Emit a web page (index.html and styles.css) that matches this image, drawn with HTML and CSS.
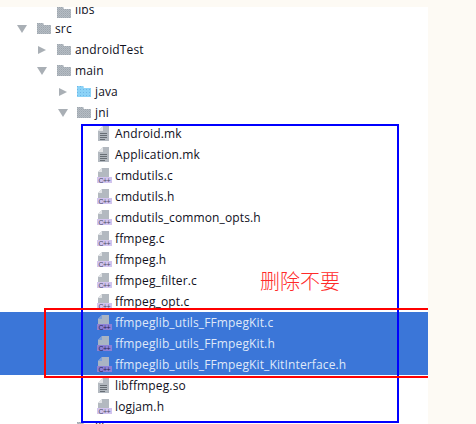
FILE: index.html
```html
<!DOCTYPE html>
<html lang="zh">
<head>
<meta charset="utf-8">
<title>jni</title>
<link rel="stylesheet" href="styles.css">
</head>
<body>
<svg class="defs" width="0" height="0" aria-hidden="true">
  <defs>
    <pattern id="dots" width="2" height="2" patternUnits="userSpaceOnUse">
      <rect width="1" height="1" fill="#9ea6ae"/>
      <rect x="1" y="1" width="1" height="1" fill="#a8b0b8"/>
    </pattern>
    <pattern id="bluedots" width="3" height="3" patternUnits="userSpaceOnUse">
      <rect width="1" height="1" fill="#6fb6e6"/>
    </pattern>
    <symbol id="folder" viewBox="0 0 14 11">
      <path d="M0 0h6l1 2h7v9H0z" fill="#b6bdc4"/>
      <path d="M0 0h6l1 2h7v9H0z" fill="url(#dots)"/>
    </symbol>
    <symbol id="srcfolder" viewBox="0 0 14 11">
      <path d="M0 0h6l1 2h7v9H0z" fill="#8cd3f7"/>
      <path d="M0 0h6l1 2h7v9H0z" fill="url(#bluedots)"/>
    </symbol>
    <symbol id="textfile" viewBox="0 0 11 15">
      <path d="M5 0h6v15H0V5z" fill="#b3b9c0"/>
      <path d="M0 5l5-5v5z" fill="#e2e4e7"/>
      <path d="M2 7.500h7M2 9.500h7M2 11.500h7M2 13.500h5" stroke="#666d74" fill="none"/>
    </symbol>
    <symbol id="cppfile" viewBox="0 0 15 15">
      <path d="M5 0h7v9H1V4z" fill="#b3b9c0"/>
      <path d="M1 4l4-4v4z" fill="#e2e4e7"/>
      <rect x="0" y="9" width="15" height="6" fill="#d2c4ee"/>
      <text x="1.500" y="14.500" textLength="12" class="cpp-label">C++</text>
    </symbol>
    <symbol id="cppfile-sel" viewBox="0 0 15 15">
      <path d="M5 0h7v9H1V4z" fill="#a9b4c4"/>
      <path d="M1 4l4-4v4z" fill="#7ea0d8"/>
      <rect x="0" y="9" width="15" height="6" fill="#8d80d6"/>
      <text x="1.500" y="14.500" textLength="12" class="cpp-label cpp-label-sel">C++</text>
    </symbol>
  </defs>
</svg>

<div class="stage">
  <div class="band"></div>
  <div class="panel">
    <ul class="tree">
      <li class="row clipped d2"><span class="arrow"></span><svg class="ico-folder"><use href="#folder"/></svg><span class="name">libs</span></li>
      <li class="row d1"><svg class="arrow"><path d="M0 1h10L5 9z"/></svg><svg class="ico-folder"><use href="#folder"/></svg><span class="name">src</span></li>
      <li class="row d2"><svg class="arrow"><path d="M1 1l8 4-8 4z"/></svg><svg class="ico-folder"><use href="#folder"/></svg><span class="name">androidTest</span></li>
      <li class="row d2"><svg class="arrow"><path d="M0 1h10L5 9z"/></svg><svg class="ico-folder"><use href="#folder"/></svg><span class="name">main</span></li>
      <li class="row d3"><svg class="arrow"><path d="M1 1l8 4-8 4z"/></svg><svg class="ico-folder"><use href="#srcfolder"/></svg><span class="name">java</span></li>
      <li class="row d3"><svg class="arrow"><path d="M0 1h10L5 9z"/></svg><svg class="ico-folder"><use href="#folder"/></svg><span class="name">jni</span></li>
      <li class="row file"><svg class="ico-text"><use href="#textfile"/></svg><span class="name">Android.mk</span></li>
      <li class="row file"><svg class="ico-text"><use href="#textfile"/></svg><span class="name">Application.mk</span></li>
      <li class="row file"><svg class="ico-cpp"><use href="#cppfile"/></svg><span class="name">cmdutils.c</span></li>
      <li class="row file"><svg class="ico-cpp"><use href="#cppfile"/></svg><span class="name">cmdutils.h</span></li>
      <li class="row file"><svg class="ico-cpp"><use href="#cppfile"/></svg><span class="name">cmdutils_common_opts.h</span></li>
      <li class="row file"><svg class="ico-cpp"><use href="#cppfile"/></svg><span class="name">ffmpeg.c</span></li>
      <li class="row file"><svg class="ico-cpp"><use href="#cppfile"/></svg><span class="name">ffmpeg.h</span></li>
      <li class="row file"><svg class="ico-cpp"><use href="#cppfile"/></svg><span class="name">ffmpeg_filter.c</span></li>
      <li class="row file"><svg class="ico-cpp"><use href="#cppfile"/></svg><span class="name">ffmpeg_opt.c</span></li>
      <li class="row file selected"><svg class="ico-cpp"><use href="#cppfile-sel"/></svg><span class="name">ffmpeglib_utils_FFmpegKit.c</span></li>
      <li class="row file selected"><svg class="ico-cpp"><use href="#cppfile-sel"/></svg><span class="name">ffmpeglib_utils_FFmpegKit.h</span></li>
      <li class="row file selected"><svg class="ico-cpp"><use href="#cppfile-sel"/></svg><span class="name">ffmpeglib_utils_FFmpegKit_KitInterface.h</span></li>
      <li class="row file"><svg class="ico-text"><use href="#textfile"/></svg><span class="name">libffmpeg.so</span></li>
      <li class="row file"><svg class="ico-cpp"><use href="#cppfile"/></svg><span class="name">logjam.h</span></li>
      <li class="row d3"><span class="arrow"></span><svg class="ico-folder"><use href="#folder"/></svg><span class="name">libs</span></li>
    </ul>
    <div class="mark mark-blue"></div>
    <div class="mark mark-red"></div>
    <div class="note">删除不要</div>
  </div>
</div>
</body>
</html>
```
FILE: styles.css
```css
html, body {
  margin: 0;
  padding: 0;
  background: #fdfaf4;
}

.defs {
  position: absolute;
}

.stage {
  width: 476px;
  height: 424px;
  overflow: hidden;
  display: flex;
  flex-direction: column;
}

.band {
  flex: none;
  height: 7px;
  width: 100%;
  background: #fdfaf4;
}

.panel {
  position: relative;
  flex: 1;
  width: 428px;
  background: #fff;
  overflow: hidden;
}

.tree {
  list-style: none;
  margin: 0;
  padding: 0;
  font-family: "Open Sans", "Noto Sans", sans-serif;
  font-size: 12px;
  letter-spacing: 0.13px;
  color: #10101c;
}

.row {
  display: flex;
  align-items: center;
  height: 21px;
  box-sizing: border-box;
}

.clipped {
  height: 11px;
  align-items: flex-end;
  overflow: hidden;
}

.d1 { padding-left: 17px; }
.d2 { padding-left: 37px; }
.d3 { padding-left: 57px; }
.file { padding-left: 97px; }

.arrow {
  flex: none;
  width: 10px;
  height: 10px;
  margin-right: 10px;
  fill: #a9afb5;
}

.d3 .arrow {
  margin: 0 9px 0 1px;
}

.ico-folder {
  flex: none;
  width: 14px;
  height: 11px;
  margin-right: 4px;
}

.ico-text {
  flex: none;
  width: 11px;
  height: 15px;
  margin: 0 6px 0 1px;
}

.ico-cpp {
  flex: none;
  width: 15px;
  height: 15px;
  margin-right: 3px;
}

.cpp-label {
  font-family: "Liberation Sans", sans-serif;
  font-size: 7px;
  letter-spacing: 0;
  fill: #4a4a64;
}

.cpp-label-sel {
  fill: #23234c;
}

.selected {
  background: #3b76d8;
  color: #dfe8f8;
}

.mark {
  position: absolute;
  box-sizing: border-box;
  pointer-events: none;
}

.mark-blue {
  left: 81px;
  top: 117px;
  width: 318px;
  height: 299px;
  border: 2px solid #0000ff;
}

.mark-red {
  left: 44px;
  top: 301px;
  width: 384px;
  height: 70px;
  border: 2px solid #ff0000;
  border-right: 0;
}

.note {
  position: absolute;
  left: 260px;
  top: 263px;
  font-family: "Noto Sans CJK SC", sans-serif;
  font-size: 20px;
  font-weight: 300;
  line-height: 22px;
  color: #ff2a2a;
}
```
